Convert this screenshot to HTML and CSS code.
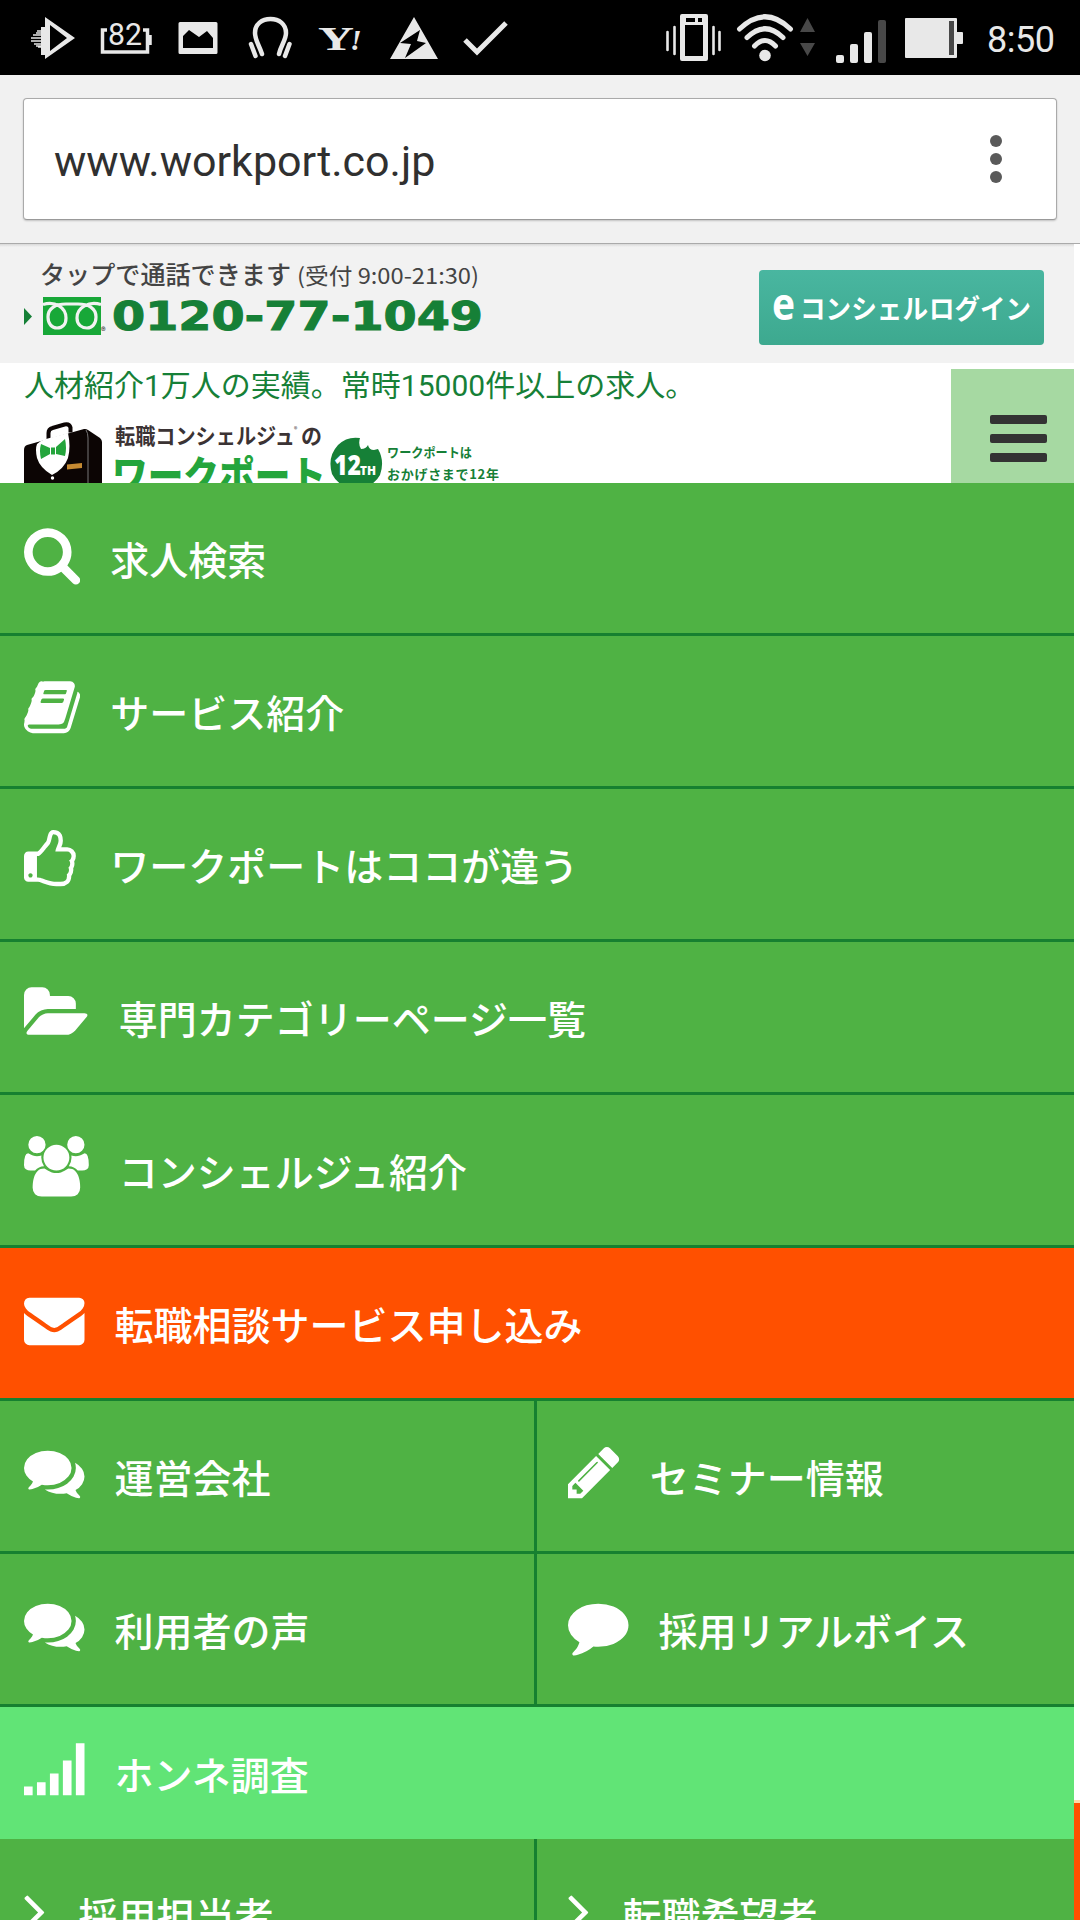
FILE: index.html
```html
<!DOCTYPE html>
<html lang="ja">
<head>
<meta charset="utf-8">
<title>ワークポート</title>
<link rel="stylesheet" href="styles.css">
</head>
<body>
<div class="screen">
  <div class="status">
    <svg class="status-left" viewBox="0 0 540 75" fill="#e8e8e8">
      <path d="M45 17L75 38L45 59V55H41V27H45zM50 25V51L67 38z" fill-rule="evenodd"/>
      <path d="M33 35h8M31 38h10M31 41h10M34 44h7M37 31h4M38 47h3M36 33h5M36 46h5" stroke="#e8e8e8" stroke-width="1.5"/>
      <path d="M107 30h-4.500v22h45v-22h-4.500M150 35v10" fill="none" stroke="#e8e8e8" stroke-width="3.500"/>
      <text x="108" y="44.500" font-size="31" textLength="34" lengthAdjust="spacingAndGlyphs">82</text>
      <path d="M180 22h36a1.500 1.500 0 0 1 1.500 1.500v29a1.500 1.500 0 0 1-1.500 1.500h-36a1.500 1.500 0 0 1-1.500-1.500v-29a1.500 1.500 0 0 1 1.500-1.500zM183 48h30v-10l-6-7-8 6-10-7-6 6z" fill-rule="evenodd"/>
      <path d="M262 54C259 45 255 40 255 33C255 24 262 19 270.500 19S286 24 286 33C286 40 281 45 279 54" fill="none" stroke="#e8e8e8" stroke-width="4.500" stroke-linecap="round"/>
      <path d="M251 44l4.500 12M289.500 44l-4.500 12" stroke="#e8e8e8" stroke-width="4.500" stroke-linecap="round"/>
      <text class="yahoo" x="318" y="50" font-size="34" textLength="36" lengthAdjust="spacingAndGlyphs">Y</text>
      <text class="yahoo yahoo-mark" x="350" y="50" font-size="30">!</text>
      <path d="M414 17l24 42h-48zM420 30l-20 13 11 1-6 14 21-15-9-2z" fill-rule="evenodd"/>
      <path d="M465 40l12 12 29-29" fill="none" stroke="#e8e8e8" stroke-width="5"/>
    </svg>
    <svg class="status-right" viewBox="640 0 348 75" fill="#e8e8e8">
      <path d="M682 14h24a2 2 0 0 1 2 2v43a2 2 0 0 1-2 2h-24a2 2 0 0 1-2-2V16a2 2 0 0 1 2-2zM685 25v31h18V25zM686 18v4h9v-4zM698 18v4h4v-4z" fill-rule="evenodd"/>
      <path d="M667.500 32v18M674.500 27v27M713.500 27v27M719.500 32v18" stroke="#e8e8e8" stroke-width="2.600" stroke-linecap="round"/>
      <g fill="none" stroke="#e8e8e8" stroke-width="5" stroke-linecap="round"><path d="M739.500 29Q765 4.500 790.500 29M747 37.500Q765 20 783 37.500M754.500 46Q765 35 775.500 46"/></g>
      <circle cx="765" cy="55.500" r="5.800"/>
      <path d="M807.500 18l7.500 14h-15zM807.500 56l7.500-13h-15z" fill="#484848"/>
      <rect x="836" y="55" width="8" height="8" rx="2"/><rect x="850" y="44" width="8" height="19" rx="2"/><rect x="864" y="32" width="8" height="31" rx="2"/>
      <rect x="878" y="20" width="8" height="43" rx="2" fill="#484848"/>
      <path d="M906 18h50a1 1 0 0 1 1 1v13h5a1 1 0 0 1 1 1v10a1 1 0 0 1-1 1h-5v13a1 1 0 0 1-1 1h-50a1 1 0 0 1-1-1v-38a1 1 0 0 1 1-1z"/>
      <rect x="949" y="21" width="5" height="34" fill="#484848"/>
    </svg>
    <span class="clock">8:50</span>
  </div>

  <div class="toolbar">
    <div class="url-box">
      <span class="url">www.workport.co.jp</span>
      <span class="dots"><i></i><i></i><i></i></span>
    </div>
  </div>

  <div class="page">
    <main class="content">
      <header class="contact">
        <svg class="tel" viewBox="24 243 480 120">
          <path d="M24 308v17l8-8.500z" fill="#168037"/>
          <text x="40" y="284" font-size="25" font-weight="500" fill="#444" textLength="251" lengthAdjust="spacingAndGlyphs">タップで通話できます</text>
          <text x="297" y="284" font-size="22" fill="#444" textLength="182" lengthAdjust="spacingAndGlyphs">(受付 9:00-21:30)</text>
          <rect x="43" y="297" width="58" height="38" fill="#18a838"/>
          <path d="M43 304.500C55 301 66 307 66 318C66 325 62 328 57 328S48 324 48 317C48 308 56 304 66 304H78C88 304 96 308 96 317C96 324 92 328 87 328S77 325 77 318C77 307 89 301 101 304.500" fill="none" stroke="#f2f2f2" stroke-width="3.200"/>
          <text x="101" y="335" font-size="9" font-weight="700" fill="#444">®</text>
          <text class="number" x="112" y="330" font-size="38.500" textLength="371" lengthAdjust="spacingAndGlyphs">0120-77-1049</text>
        </svg>
        <a class="login"><svg viewBox="0 0 285 75" fill="#fff">
          <text class="login-e" x="13" y="50" font-size="44" textLength="23" lengthAdjust="spacingAndGlyphs">e</text>
          <text x="41" y="48.500" font-size="27" font-weight="700" textLength="128" lengthAdjust="spacingAndGlyphs">コンシェル</text>
          <text x="170" y="48.500" font-size="27" font-weight="700" textLength="102" lengthAdjust="spacingAndGlyphs">ログイン</text>
        </svg></a>
      </header>

      <section class="brand">
        <div class="brand-main">
          <h1 class="tagline">人材紹介1万人の実績。常時15000件以上の求人。</h1>
          <svg class="logo" viewBox="24 419 500 64">
            <path d="M48.500 439v-6q0-4 4-5l12-3.500q5-1 6 3v5" fill="none" stroke="#0c0504" stroke-width="4"/>
            <path d="M24 450q0-4 3-5l57-16q2-.5 4 1l12 8q2 2 2 4v41H24z" fill="#0c0504"/>
            <path d="M86 430q2 3 2 8v45" fill="none" stroke="#777" stroke-width="1"/>
            <path d="M46 439l22-6q3 14 0 25-4 11-16 17-12-7-15-17-2-9 0-14 4-4 9-5z" fill="#fff"/>
            <path d="M41 444l9 4v6l-9 5q-2-8 0-15zM51 447.500h4v7h-4zM56 447l9-8q2 9 0 17l-9-2z" fill="#24a53c"/>
            <path d="M67 464.500l15-1.500v5l-15 1.500z" fill="#c58a32"/>
            <circle cx="52.500" cy="478" r="1.700" fill="#fff"/>
            <text x="115" y="444" font-size="22" font-weight="700" fill="#3b3334" textLength="180" lengthAdjust="spacingAndGlyphs">転職コンシェルジュ</text>
            <text x="294" y="432" font-size="7" fill="#3b3334">®</text>
            <text x="301" y="444" font-size="22" font-weight="700" fill="#3b3334" textLength="21" lengthAdjust="spacingAndGlyphs">の</text>
            <text x="112" y="489.500" font-size="40" font-weight="900" fill="#24a53c" textLength="214" lengthAdjust="spacingAndGlyphs">ワークポート</text>
            <path d="M360 438q-2 6 1 11 5 0 7-4 1 5 6 5l4-1q7 12 2 26-7 13-24 13t-24-14q-5-17 6-29 9-9 22-7z" fill="#168037"/>
            <text class="badge" x="334" y="475" font-size="28" textLength="27" lengthAdjust="spacingAndGlyphs">12</text>
            <text class="badge" x="360" y="475" font-size="12" textLength="16" lengthAdjust="spacingAndGlyphs">TH</text>
            <text x="387" y="457" font-size="13" font-weight="700" fill="#168037" textLength="85" lengthAdjust="spacingAndGlyphs">ワークポートは</text>
            <text x="387" y="479" font-size="13" font-weight="700" fill="#168037" textLength="112" lengthAdjust="spacing">おかげさまで12年</text>
          </svg>
        </div>
        <button class="burger"><i></i><i></i><i></i></button>
      </section>

      <nav class="menu">
        <a class="item"><svg class="icon" viewBox="64 0 1664 1792"><path d="M1216 832q0-185-131.500-316.500t-316.500-131.500-316.500 131.500-131.500 316.500 131.500 316.500 316.500 131.500 316.500-131.500 131.500-316.500zm512 832q0 52-38 90t-90 38q-54 0-90-38l-343-342q-179 124-399 124-143 0-273.500-55.500t-225-150-150-225-55.500-273.500 55.500-273.500 150-225 225-150 273.500-55.500 273.500 55.500 225 150 150 225 55.500 273.500q0 220-124 399l343 343q37 37 37 90z"/></svg><span>求人検索</span></a>
        <a class="item"><svg class="icon" viewBox="64 0 1664 1792"><path d="M1703 478q40 57 18 129l-275 906q-19 64-76.500 107.500t-122.500 43.500h-923q-77 0-148.500-53.500t-99.500-131.500q-24-67-2-127 0-4 3-27t4-37q1-8-3-21.500t-3-19.500q2-11 8-21t16.500-23.500 16.500-23.500q23-38 45-91.500t30-91.500q3-10 .5-30t-.5-28q3-11 17-28t17-23q21-36 42-92t25-90q1-9-2.500-32t.5-28q4-13 22-30.500t22-22.500q19-26 42.500-84.500t27.500-96.500q1-8-3-25.500t-2-26.500q2-8 9-18t18-23 17-21q8-12 16.500-30.500t15-35 16-36 19.500-32 26.500-23.500 36-11.500 47.500 5.500l-1 3q38-9 51-9h761q74 0 114 56t18 130l-274 906q-36 119-71.500 153.500t-128.500 34.500h-869q-27 0-38 15-11 16-1 43 24 70 144 70h923q29 0 56-15.500t35-41.500l300-987q7-22 5-57 38 15 59 43zm-1064 2q-4 13 2 22.500t20 9.500h608q13 0 25.500-9.500t16.500-22.500l21-64q4-13-2-22.500t-20-9.500h-608q-13 0-25.500 9.500t-16.500 22.500zm-83 256q-4 13 2 22.500t20 9.500h608q13 0 25.500-9.500t16.500-22.500l21-64q4-13-2-22.500t-20-9.500h-608q-13 0-25.500 9.500t-16.500 22.500z"/></svg><span>サービス紹介</span></a>
        <a class="item"><svg class="icon" viewBox="128 0 1664 1792"><path d="M384 1344q0-26-19-45t-45-19-45 19-19 45 19 45 45 19 45-19 19-45zm1152-576q0-51-39-89.500t-89-38.500h-352q0-58 48-159.500t48-160.500q0-98-32-145t-128-47q-26 26-38 85t-30.500 125.500-59.500 109.500q-22 23-77 91-4 5-23 30t-31.500 41-34.500 42.500-40 44-38.500 35.500-40 27-35.500 9h-32v640h32q13 0 31.500 3t33 6.500 38 11 35 11.500 35.500 12.500 29 10.500q211 73 342 73h121q192 0 192-167 0-26-5-56 30-16 47.500-52.500t17.500-73.500-18-69q53-50 53-119 0-25-10-55.500t-25-47.500q32-1 53.500-47t21.500-81zm128-1q0 89-49 163 9 33 9 69 0 77-38 144 3 21 3 43 0 101-60 178 1 139-85 219.500t-227 80.500h-129q-96 0-189.500-22.500t-216.500-65.500q-116-40-138-40h-288q-53 0-90.500-37.500t-37.500-90.500v-640q0-53 37.500-90.500t90.500-37.500h274q36-24 137-155 58-75 107-128 24-25 35.500-85.500t30.500-126.500 62-108q39-37 90-37 84 0 151 32.500t102 101.500 35 186q0 93-48 192h176q104 0 180 76t76 179z"/></svg><span>ワークポートはココが違う</span></a>
        <a class="item"><svg class="icon" viewBox="0 0 1920 1792"><path d="M1879 952q0 31-31 66l-336 396q-43 51-120.500 86.500t-143.500 35.500h-1088q-34 0-60.500-13t-26.500-43q0-31 31-66l336-396q43-51 120.500-86.500t143.500-35.500h1088q34 0 60.500 13t26.500 43zm-343-344v160h-832q-94 0-197 47.500t-164 119.500l-337 396-5 6q0-4-.5-12.500t-.5-12.500v-960q0-92 66-158t158-66h320q92 0 158 66t66 158v32h544q92 0 158 66t66 158z"/></svg><span>専門カテゴリーページ一覧</span></a>
        <a class="item"><svg class="icon" viewBox="0 0 1920 1792"><path d="M593 896q-162 5-265 128h-134q-82 0-138-40.500t-56-118.500q0-353 124-353 6 0 43.500 21t97.500 42.500 119 21.500q67 0 133-23-5 37-5 66 0 139 81 256zm1071 637q0 120-73 189.500t-194 69.500h-874q-121 0-194-69.500t-73-189.500q0-53 3.500-103.500t14-109 26.500-108.500 43-97.500 62-81 85.500-53.500 111.500-20q10 0 43 21.500t73 48 107 48 135 21.500 135-21.500 107-48 73-48 43-21.500q61 0 111.500 20t85.500 53.500 62 81 43 97.500 26.500 108.500 14 109 3.500 103.500zm-1024-1277q0 106-75 181t-181 75-181-75-75-181 75-181 181-75 181 75 75 181zm704 384q0 159-112.500 271.500t-271.500 112.500-271.500-112.500-112.500-271.500 112.500-271.500 271.500-112.500 271.500 112.500 112.500 271.500zm576 225q0 78-56 118.500t-138 40.500h-134q-103-123-265-128 81-117 81-256 0-29-5-66 66 23 133 23 59 0 119-21.500t97.500-42.500 43.500-21q124 0 124 353zm-128-609q0 106-75 181t-181 75-181-75-75-181 75-181 181-75 181 75 75 181z"/></svg><span>コンシェルジュ紹介</span></a>
        <a class="item apply"><svg class="icon" viewBox="0 0 1792 1792"><path d="M1792 710v794q0 66-47 113t-113 47h-1472q-66 0-113-47t-47-113v-794q44 49 101 87 362 246 497 345 57 42 92.500 65.500t94.500 48 110 24.500h2q51 0 110-24.500t94.500-48 92.500-65.500q170-123 498-345 57-39 100-87zm0-294q0 79-49 151t-122 123q-376 261-468 325-10 7-42.500 31t-54 38.500-52 32.500-57.500 27-50 9h-2q-23 0-50-9t-57.500-27-52-32.500-54-38.500-42.500-31q-91-64-262-182.500t-205-142.500q-62-42-117-115.500t-55-136.500q0-78 41.500-130t118.500-52h1472q65 0 112.500 47t47.500 113z"/></svg><span>転職相談サービス申し込み</span></a>
        <div class="pair">
          <a class="item"><svg class="icon" viewBox="0 0 1792 1792"><path id="comments" d="M1408 768q0 139-94 257t-256.500 186.500-353.500 68.500q-86 0-176-16-124 88-278 128-36 9-86 16h-3q-11 0-20.500-8t-11.500-21q-1-3-1-6.500t.5-6.500 2-6l2.500-5 3.500-5.500 4-5 4.500-5 4-4.500q5-6 23-25t26-29.500 22.500-29 25-38.500 20.500-44q-124-72-195-177t-71-224q0-139 94-257t256.500-186.500 353.500-68.500 353.500 68.500 256.500 186.500 94 257zm384 256q0 120-71 224.500t-195 176.500q10 24 20.500 44t25 38.500 22.500 29 26 29.500 23 25q1 1 4 4.500t4.500 5 4 5 3.500 5.500l2.500 5 2 6 .5 6.500-1 6.500q-3 14-13 22t-22 7q-50-7-86-16-154-40-278-128-90 16-176 16-271 0-472-132 58 4 88 4 161 0 309-45t264-129q125-92 192-212t67-254q0-77-23-152 129 71 204 178t75 230z"/></svg><span>運営会社</span></a>
          <a class="item"><svg class="icon" viewBox="128 0 1536 1792"><path d="M491 1536l91-91-235-235-91 91v107h128v128h107zm523-928q0-22-22-22-10 0-17 7l-542 542q-7 7-7 17 0 22 22 22 10 0 17-7l542-542q7-7 7-17zm-54-192l416 416-832 832h-416v-416zm683 96q0 53-37 90l-166 166-416-416 166-165q36-38 90-38 53 0 91 38l235 234q37 39 37 91z"/></svg><span>セミナー情報</span></a>
        </div>
        <div class="pair">
          <a class="item"><svg class="icon" viewBox="0 0 1792 1792"><use href="#comments"/></svg><span>利用者の声</span></a>
          <a class="item"><svg class="icon" viewBox="0 0 1792 1792"><path d="M1792 896q0 174-120 321.500t-326 233-450 85.500q-70 0-145-8-198 175-460 242-49 14-114 22-17 2-30.500-9t-17.500-29v-1q-3-4-.5-12t2-10 4.500-9.500l6-9 7-8.500 8-9q7-8 31-34.500t34.500-38 31-39.500 32.500-51 27-59 26-76q-157-89-247.500-220t-90.500-281q0-130 71-248.500t191-204.500 286-136.500 348-50.500q244 0 450 85.500t326 233 120 321.500z"/></svg><span>採用リアルボイス</span></a>
        </div>
        <a class="item survey"><svg class="icon" viewBox="0 0 1792 1792"><path d="M0 1408h256v256H0zM384 1280h256v384H384zM768 1024h256v640H768zM1152 640h256v1024h-256zM1536 128h256v1536h-256z"/></svg><span>ホンネ調査</span></a>
        <div class="pair more">
          <a class="item"><svg class="icon" viewBox="574 0 640 1792"><path id="angle" d="M1171 960q0 13-10 23l-466 466q-10 10-23 10t-23-10l-50-50q-10-10-10-23t10-23l393-393-393-393q-10-10-10-23t10-23l50-50q10-10 23-10t23 10l466 466q10 10 10 23z"/></svg><span>採用担当者</span></a>
          <a class="item"><svg class="icon" viewBox="574 0 640 1792"><use href="#angle"/></svg><span>転職希望者</span></a>
        </div>
      </nav>
    </main>
    <aside class="edge"></aside>
  </div>
</div>
</body>
</html>
```
FILE: styles.css
```css
* { box-sizing: border-box; }
body { margin: 0; background: #fff; font-family: Roboto, "Noto Sans CJK JP", sans-serif; }
svg { display: block; flex: none; }
.screen { width: 1080px; height: 1920px; overflow: hidden; display: flex; flex-direction: column; }

.status { height: 75px; flex: none; background: #000; display: flex; }
.status-left { width: 540px; height: 75px; margin-right: 100px; }
.status-right { width: 348px; height: 75px; }
.yahoo { font-family: "Liberation Serif", serif; font-weight: 700; }
.yahoo-mark { font-style: italic; }
.clock { color: #e8e8e8; font-size: 36px; line-height: 80px; letter-spacing: -0.5px; margin-left: -1px; }

.toolbar { height: 168px; flex: none; background: #f1f1f1; padding: 23px 23px 0; }
.url-box { height: 122px; background: #fff; border: 1px solid #aaa; border-bottom-color: #999; border-radius: 4px; box-shadow: 0 1px 2px #0003; display: flex; justify-content: space-between; align-items: center; padding: 0 54px 0 30px; }
.url { color: #303030; font-size: 43px; line-height: 50px; margin-top: 3px; }
.dots { display: flex; flex-direction: column; gap: 6px; }
.dots i { width: 12px; height: 12px; border-radius: 50%; background: #5a5a5a; }

.page { height: 1677px; flex: none; display: grid; grid-template-columns: 1074px 6px; border-top: 1px solid #aaa; }
.content { overflow: hidden; }
.edge { margin-top: 1556px; background: #ff5000; border-top: 3px solid #ffd9a8; }

.contact { height: 119px; background: linear-gradient(#d8d8d8, #f2f2f2 3px); padding: 0 30px 0 24px; display: flex; justify-content: space-between; align-items: flex-start; }
.tel { width: 480px; height: 120px; margin-top: -1px; font-family: "Noto Sans CJK JP", sans-serif; }
.number { font-family: "DejaVu Sans", sans-serif; font-weight: 700; fill: #168037; stroke: #168037; stroke-width: 1; }
.login { margin-top: 26px; width: 285px; height: 75px; border-radius: 4px; background: linear-gradient(#49b6a0, #3da98f); font-family: "Noto Sans CJK JP", sans-serif; }
.login-e { font-family: "Open Sans", sans-serif; font-weight: 700; }

.brand { height: 120px; padding-left: 24px; display: flex; justify-content: space-between; overflow: hidden; }
.tagline { margin: 0; padding-top: 3px; height: 56px; font-size: 30px; line-height: 40px; font-weight: 400; color: #168037; white-space: nowrap; }
.logo { width: 500px; height: 64px; font-family: "Noto Sans CJK JP", sans-serif; }
.badge { font-family: "Open Sans", sans-serif; font-weight: 800; fill: #fff; }
.burger { border: 0; margin: 6px 0 0; width: 123px; height: 114px; padding: 46px 27px 0 39px; background: #a6d9a2; display: flex; flex-direction: column; gap: 10px; }
.burger i { width: 57px; height: 9px; border-radius: 2px; background: #333; }

.menu { background: #4fb244; color: #fff; font-size: 39px; font-weight: 500; font-family: "Noto Sans CJK JP", sans-serif; }
.item { height: 153px; border-bottom: 3px solid #168030; display: flex; align-items: flex-start; gap: 30px; padding: 41px 0 0 24px; }
.item span { line-height: 40px; margin-top: 14px; white-space: nowrap; }
.icon { height: 60.500px; fill: #fff; }
.apply { background: #ff5000; }
.pair { display: grid; grid-template-columns: 537px 537px; }
.pair .item:first-child { border-right: 3px solid #168030; }
.pair .item:last-child { padding-left: 31px; }
.survey { height: 132px; padding-top: 32px; border-bottom: 0; background: #61e476; }
.more .item { gap: 33px; }
```
